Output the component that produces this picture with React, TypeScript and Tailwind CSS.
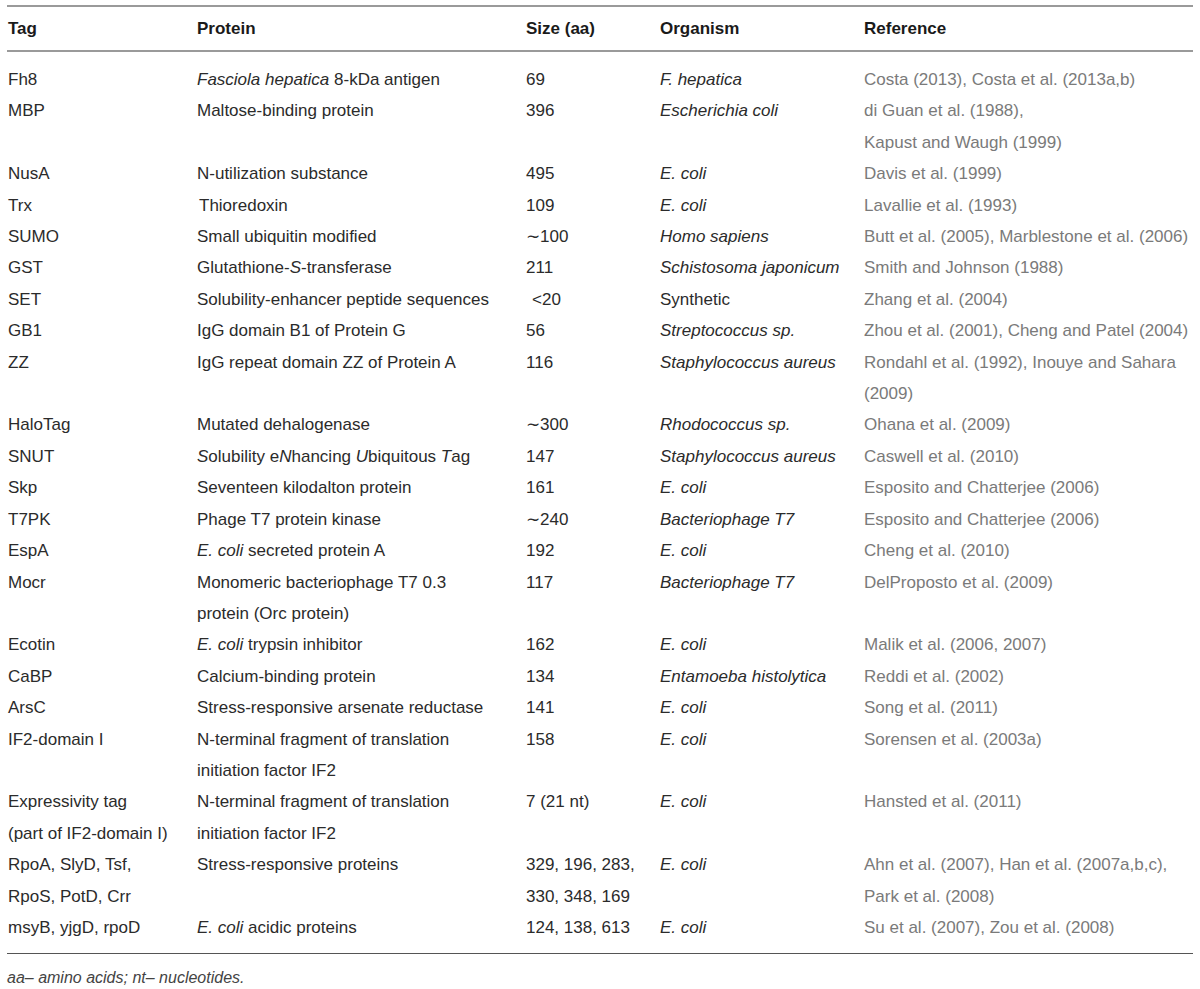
import type { ReactNode } from "react";

type Row = [ReactNode, ReactNode, ReactNode, ReactNode, ReactNode];

const I = ({ children }: { children: ReactNode }) => <i>{children}</i>;

const rows: Row[] = [
  ["Fh8", <><I>Fasciola hepatica</I> 8-kDa antigen</>, "69", <I>F. hepatica</I>, "Costa (2013), Costa et al. (2013a,b)"],
  ["MBP", "Maltose-binding protein", "396", <I>Escherichia coli</I>, <>di Guan et al. (1988),<br />Kapust and Waugh (1999)</>],
  ["NusA", "N-utilization substance", "495", <I>E. coli</I>, "Davis et al. (1999)"],
  ["Trx", <span className="pl-[2px]">Thioredoxin</span>, "109", <I>E. coli</I>, "Lavallie et al. (1993)"],
  ["SUMO", "Small ubiquitin modified", "∼100", <I>Homo sapiens</I>, "Butt et al. (2005), Marblestone et al. (2006)"],
  ["GST", <>Glutathione-<I>S</I>-transferase</>, "211", <I>Schistosoma japonicum</I>, "Smith and Johnson (1988)"],
  ["SET", "Solubility-enhancer peptide sequences", <span className="pl-[6px]">&lt;20</span>, "Synthetic", "Zhang et al. (2004)"],
  ["GB1", "IgG domain B1 of Protein G", "56", <I>Streptococcus sp.</I>, "Zhou et al. (2001), Cheng and Patel (2004)"],
  ["ZZ", "IgG repeat domain ZZ of Protein A", "116", <I>Staphylococcus aureus</I>, <>Rondahl et al. (1992), Inouye and Sahara<br />(2009)</>],
  ["HaloTag", "Mutated dehalogenase", "∼300", <I>Rhodococcus sp.</I>, "Ohana et al. (2009)"],
  ["SNUT", <><I>S</I>olubility e<I>N</I>hancing <I>U</I>biquitous <I>T</I>ag</>, "147", <I>Staphylococcus aureus</I>, "Caswell et al. (2010)"],
  ["Skp", "Seventeen kilodalton protein", "161", <I>E. coli</I>, "Esposito and Chatterjee (2006)"],
  ["T7PK", "Phage T7 protein kinase", "∼240", <I>Bacteriophage T7</I>, "Esposito and Chatterjee (2006)"],
  ["EspA", <><I>E. coli</I> secreted protein A</>, "192", <I>E. coli</I>, "Cheng et al. (2010)"],
  ["Mocr", <>Monomeric bacteriophage T7 0.3<br />protein (Orc protein)</>, "117", <I>Bacteriophage T7</I>, "DelProposto et al. (2009)"],
  ["Ecotin", <><I>E. coli</I> trypsin inhibitor</>, "162", <I>E. coli</I>, "Malik et al. (2006, 2007)"],
  ["CaBP", "Calcium-binding protein", "134", <I>Entamoeba histolytica</I>, "Reddi et al. (2002)"],
  ["ArsC", "Stress-responsive arsenate reductase", "141", <I>E. coli</I>, "Song et al. (2011)"],
  ["IF2-domain I", <>N-terminal fragment of translation<br />initiation factor IF2</>, "158", <I>E. coli</I>, "Sorensen et al. (2003a)"],
  [<>Expressivity tag<br />(part of IF2-domain I)</>, <>N-terminal fragment of translation<br />initiation factor IF2</>, "7 (21 nt)", <I>E. coli</I>, "Hansted et al. (2011)"],
  [<>RpoA, SlyD, Tsf,<br />RpoS, PotD, Crr</>, "Stress-responsive proteins", <>329, 196, 283,<br />330, 348, 169</>, <I>E. coli</I>, <>Ahn et al. (2007), Han et al. (2007a,b,c),<br />Park et al. (2008)</>],
  ["msyB, yjgD, rpoD", <><I>E. coli</I> acidic proteins</>, "124, 138, 613", <I>E. coli</I>, "Su et al. (2007), Zou et al. (2008)"],
];

const cols = "grid grid-cols-[189px_329px_134px_204px_1fr]";

export default function App() {
  return (
    <div className="w-[1200px] h-[989px] overflow-hidden bg-white font-['Liberation_Sans',Arial,sans-serif] text-[17px] text-[#2b2b2b]">
      <div className="pt-[5px] px-[7px]">
        <div className="border-t-2 border-[#9a9a9a]" />
        <div className={`${cols} px-[1px] h-[43px] items-center font-bold text-[#1a1a1a]`}>
          <div>Tag</div>
          <div>Protein</div>
          <div>Size (aa)</div>
          <div>Organism</div>
          <div>Reference</div>
        </div>
        <div className="border-t-2 border-[#9a9a9a]" />
        <div className="pt-[12px] pb-[10px] leading-[31.4px]">
          {rows.map((r, i) => (
            <div key={i} className={`${cols} px-[1px]`}>
              <div>{r[0]}</div>
              <div>{r[1]}</div>
              <div>{r[2]}</div>
              <div>{r[3]}</div>
              <div className="whitespace-nowrap text-[#7a7a7a]">{r[4]}</div>
            </div>
          ))}
        </div>
        <div className="border-t border-[#555]" />
        <div className="pt-[12px] italic text-[#444] text-[16px]">
          aa– amino acids; nt– nucleotides.
        </div>
      </div>
    </div>
  );
}
